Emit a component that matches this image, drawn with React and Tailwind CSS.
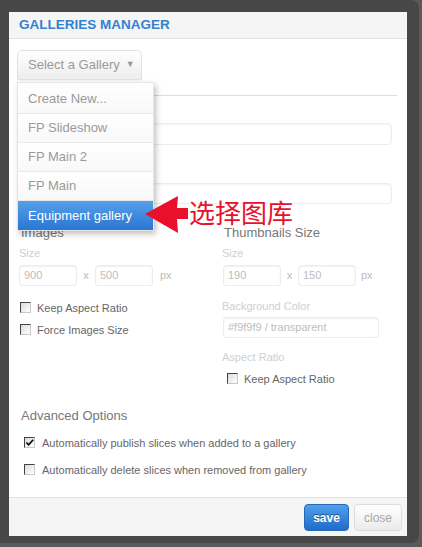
import React from "react";

function Box({ checked }) {
  return (
    <span className="relative inline-block w-[11px] h-[11px] shrink-0 border-t border-l border-t-[#444] border-l-[#444] border-b border-r border-b-[#c8c8c8] border-r-[#c8c8c8] bg-gradient-to-br from-[#dcdcdc] to-white">
      {checked && (
        <svg viewBox="0 0 11 11" className="absolute left-0 top-0 w-[10px] h-[10px]">
          <path d="M1.5 5 L4 7.5 L9 2" stroke="#000" strokeWidth="1.8" fill="none" />
        </svg>
      )}
    </span>
  );
}

function Field({ value, w }) {
  return (
    <div className={`${w} h-[21px] border border-[#ececec] rounded-[3px] shadow-[inset_0_1px_2px_rgba(0,0,0,0.06)] flex items-center pl-[4px] text-[11px] text-[#bdbdbd]`}>
      {value}
    </div>
  );
}

export default function App() {
  const items = ["Create New...", "FP Slideshow", "FP Main 2", "FP Main"];
  return (
    <div className="w-[422px] h-[547px] bg-[#5a5a5a] overflow-hidden relative font-['Liberation_Sans',Arial,sans-serif]">
      <div className="w-[419px] h-[543px] bg-[#474747] rounded-br-[8px] rounded-tr-[8px] pt-[12px] pl-[9px]">
        <div className="w-[398px] h-[524px] bg-white flex flex-col relative">
          {/* header */}
          <div className="h-[27px] bg-[#f5f5f5] border-b border-[#e2e2e2] flex items-center pl-[10px]">
            <span className="text-[13.5px] font-bold text-[#3481cf]">GALLERIES MANAGER</span>
          </div>

          {/* body */}
          <div className="flex-1 relative px-[8px] pt-[11px]">
            <div className="w-[125px] h-[30px] rounded-t-[5px] border border-[#e2e2e2] bg-gradient-to-b from-white to-[#ededed] flex items-center pl-[10px] text-[13px] text-[#9a9a9a] shadow-[0_1px_1px_rgba(0,0,0,0.05)]">
              Select a Gallery
              <span className="ml-[6px] text-[9px] text-[#999]">▼</span>
            </div>
            <div className="mt-[15px] w-[380px] border-t border-[#dddddd]" />

            <div className="ml-[2px]">
              <div className="mt-[27px] w-[373px] h-[22px] border border-[#ececec] rounded-[4px] shadow-[inset_0_1px_2px_rgba(0,0,0,0.05)]" />
              <div className="mt-[38px] w-[373px] h-[21px] border border-[#ececec] rounded-[4px] shadow-[inset_0_1px_2px_rgba(0,0,0,0.05)]" />

              <div className="flex mt-[21px]">
                {/* left column */}
                <div className="w-[203px]">
                  <div className="text-[13px] leading-[16px] text-[#777] ml-[2px]">Images</div>
                  <div className="mt-[6px] text-[11px] leading-[13px] text-[#cfcfcf]">Size</div>
                  <div className="mt-[5px] flex items-center">
                    <Field value="900" w="w-[58px]" />
                    <span className="w-[18px] text-center text-[11px] text-[#bbb]">x</span>
                    <Field value="500" w="w-[58px]" />
                    <span className="ml-[7px] text-[11px] text-[#bbb]">px</span>
                  </div>
                  <div className="mt-[15px] ml-[1px] h-[12px] flex items-center gap-[6px] text-[11px] text-[#666]">
                    <Box />
                    <span className="mt-[3px]">Keep Aspect Ratio</span>
                  </div>
                  <div className="mt-[10px] ml-[1px] h-[12px] flex items-center gap-[6px] text-[11px] text-[#666]">
                    <Box />
                    <span className="mt-[3px]">Force Images Size</span>
                  </div>
                </div>
                {/* right column */}
                <div className="w-[170px]">
                  <div className="text-[13px] leading-[16px] text-[#777] ml-[2px]">Thumbnails Size</div>
                  <div className="mt-[6px] text-[11px] leading-[13px] text-[#cfcfcf]">Size</div>
                  <div className="mt-[5px] flex items-center ml-[1px]">
                    <Field value="190" w="w-[58px]" />
                    <span className="w-[17px] text-center text-[11px] text-[#bbb]">x</span>
                    <Field value="150" w="w-[58px]" />
                    <span className="ml-[5px] text-[11px] text-[#bbb]">px</span>
                  </div>
                  <div className="mt-[14px] text-[11px] leading-[13px] text-[#cfcfcf]">Background Color</div>
                  <div className="mt-[4px] ml-[1px]">
                    <Field value="#f9f9f9 / transparent" w="w-[156px]" />
                  </div>
                  <div className="mt-[13px] text-[11px] leading-[13px] text-[#cfcfcf]">Aspect Ratio</div>
                  <div className="mt-[8px] ml-[5px] h-[12px] flex items-center gap-[6px] text-[11px] text-[#666]">
                    <Box />
                    <span className="mt-[3px]">Keep Aspect Ratio</span>
                  </div>
                </div>
              </div>

              <div className="mt-[24px] ml-[2px] text-[13px] leading-[16px] text-[#777]">Advanced Options</div>
              <div className="mt-[12px] ml-[5px] h-[12px] flex items-center gap-[7px] text-[11px] text-[#666]">
                <Box checked />
                <span className="mt-[2px]">Automatically publish slices when added to a gallery</span>
              </div>
              <div className="mt-[15px] ml-[5px] h-[12px] flex items-center gap-[7px] text-[11px] text-[#666]">
                <Box />
                <span className="mt-[2px]">Automatically delete slices when removed from gallery</span>
              </div>
            </div>

            {/* dropdown menu */}
            <div className="absolute left-[8px] top-[43px] w-[137px] pt-[2px] bg-white shadow-[2px_3px_6px_rgba(0,0,0,0.25)] border border-[#e6e6e6]">
              {items.map((t) => (
                <div key={t} className="h-[29px] flex items-center pl-[10px] text-[13px] text-[#9a9a9a] border-b border-[#e8e8e8] bg-gradient-to-b from-white to-[#f8f8f8]">
                  {t}
                </div>
              ))}
              <div className="h-[29px] flex items-center pl-[10px] text-[13px] text-white bg-gradient-to-b from-[#55a0e8] to-[#2a76d2]">
                Equipment gallery
              </div>
            </div>
          </div>

          {/* footer */}
          <div className="h-[39px] bg-[#f5f5f5] border-t border-[#e4e4e4] flex items-start justify-end gap-[5px] pt-[6px] pr-[5px]">
            <div className="w-[45px] h-[27px] rounded-[4px] border border-[#2a68b5] bg-gradient-to-b from-[#4f9fec] to-[#1f6ccb] flex items-center justify-center text-[12px] font-bold text-white [text-shadow:0_-1px_0_rgba(0,0,0,0.45)]">
              save
            </div>
            <div className="w-[48px] h-[27px] rounded-[4px] border border-[#dcdcdc] bg-gradient-to-b from-white to-[#ebebeb] flex items-center justify-center text-[12px] text-[#a8a8a8]">
              close
            </div>
          </div>

          {/* annotation */}
          <svg className="absolute left-[136px] top-[184px]" width="44" height="38" viewBox="0 0 44 38">
            <polygon points="0,18 33,0 32,12 43,12 43,23 32,23 33,37" fill="#e8102a" />
          </svg>
          <div className="absolute left-[180px] top-[187px] text-[26px] leading-[26px] text-[#e5112d] font-['Noto_Sans_CJK_SC',sans-serif]">
            选择图库
          </div>
        </div>
      </div>
    </div>
  );
}
